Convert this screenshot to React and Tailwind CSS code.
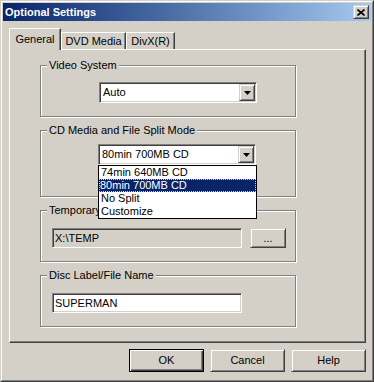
import React from "react";

const sunken =
  "border border-t-[#808080] border-l-[#808080] border-b-white border-r-white p-px shadow-[inset_1px_1px_0_#404040,inset_-1px_-1px_0_#d4d0c8]";
const raised =
  "border border-t-[#d4d0c8] border-l-[#d4d0c8] border-b-[#404040] border-r-[#404040] shadow-[inset_1px_1px_0_white,inset_-1px_-1px_0_#808080]";

function DropBtn() {
  return (
    <div className={`w-[16px] h-[17px] flex items-center justify-center bg-[#d4d0c8] ${raised}`}>
      <svg width="7" height="4" viewBox="0 0 7 4">
        <path d="M0 0H7L3.5 4Z" fill="black" />
      </svg>
    </div>
  );
}

function Combo({ value, children }) {
  return (
    <div className="relative w-[158px]">
      <div className={`h-[21px] bg-white flex items-center ${sunken}`}>
        <span className="flex-1 pl-[2px] leading-[13px]">{value}</span>
        <DropBtn />
      </div>
      {children}
    </div>
  );
}

function Group({ label, h, className, children }) {
  return (
    <div
      className={`relative w-[256px] border border-[#808080] shadow-[1px_1px_0_white,inset_1px_1px_0_white] ${h} ${className}`}
    >
      <span className="absolute left-[6px] -top-[7px] px-[2px] bg-[#d4d0c8] leading-[13px]">
        {label}
      </span>
      {children}
    </div>
  );
}

function Button({ children, def }) {
  return (
    <div
      className={`w-[75px] h-[23px] flex items-center justify-center ${
        def
          ? "border border-black shadow-[inset_1px_1px_0_white,inset_-1px_-1px_0_#404040,inset_-2px_-2px_0_#808080]"
          : raised
      }`}
    >
      {children}
    </div>
  );
}

export default function App() {
  return (
    <div className="w-[374px] h-[382px] bg-[#d4d0c8] border border-t-[#d4d0c8] border-l-[#d4d0c8] border-r-[#404040] border-b-[#404040] font-['Liberation_Sans',Arial,sans-serif] text-[11px] text-black select-none">
      <div className="h-full border border-t-white border-l-white border-r-[#808080] border-b-[#808080] p-px flex flex-col">
        {/* Title bar */}
        <div className="h-[18px] flex items-center bg-gradient-to-r from-[#0a246a] to-[#a6caf0] pl-[2px] pr-[2px]">
          <span className="flex-1 text-white font-bold text-[11px] leading-[13px]">Optional Settings</span>
          <div className={`w-[16px] h-[14px] bg-[#d4d0c8] flex items-center justify-center ${raised}`}>
            <svg width="8" height="7" viewBox="0 0 8 7">
              <path d="M0.5 0.5L7.5 6.5M7.5 0.5L0.5 6.5" stroke="black" strokeWidth="1.6" />
            </svg>
          </div>
        </div>

        {/* Tabs */}
        <div className="mt-[7px] h-[21px] pl-[6px] flex items-end">
          <div className="relative z-10 -mb-px h-[22px] w-[52px] bg-[#d4d0c8] border-l border-t border-l-white border-t-white border-r border-r-[#404040] shadow-[inset_-1px_0_0_#808080] flex items-start justify-center pt-[4px] leading-[13px]">
            General
          </div>
          <div className="h-[17px] w-[65px] border-l border-t border-l-white border-t-white border-r border-r-[#404040] shadow-[inset_-1px_0_0_#808080] flex items-center justify-center leading-[13px]">
            DVD Media
          </div>
          <div className="h-[17px] w-[49px] border-l border-t border-l-white border-t-white border-r border-r-[#404040] shadow-[inset_-1px_0_0_#808080] flex items-center justify-center leading-[13px]">
            DivX(R)
          </div>
        </div>

        {/* Panel */}
        <div className="ml-[6px] mr-[5px] h-[294px] border border-t-white border-l-white border-r-[#404040] border-b-[#404040] shadow-[inset_-1px_-1px_0_#808080] pl-[30px] pt-[15px] flex flex-col gap-[13px]">
          <Group label="Video System" h="h-[52px]" className="pt-[16px] pl-[58px]">
            <Combo value="Auto" />
          </Group>
          <Group label="CD Media and File Split Mode" h="h-[67px]" className="pt-[13px] pl-[57px] z-10">
            <Combo value="80min 700MB CD">
              <div className="absolute left-0 top-full w-[159px] h-[54px] bg-white border border-black leading-[13px]">
                <div className="h-[13px] pl-[2px]">74min 640MB CD</div>
                <div className="h-[13px] pl-px bg-[#0a246a] text-white outline outline-1 outline-dotted outline-[#e8d870] -outline-offset-1">
                  80min 700MB CD
                </div>
                <div className="h-[13px] pl-[2px]">No Split</div>
                <div className="h-[13px] pl-[2px]">Customize</div>
              </div>
            </Combo>
          </Group>
          <Group label="Temporary Folder" h="h-[52px]" className="pt-[17px] pl-[11px]">
            <div className="flex gap-[8px]">
              <div className={`w-[190px] h-[20px] bg-[#d4d0c8] flex items-center pl-[2px] leading-[13px] ${sunken}`}>
                X:\TEMP
              </div>
              <div className={`w-[36px] h-[20px] flex items-center justify-center leading-[13px] ${raised}`}>
                ...
              </div>
            </div>
          </Group>
          <Group label="Disc Label/File Name" h="h-[52px]" className="pt-[17px] pl-[11px]">
            <div className={`w-[190px] h-[20px] bg-white flex items-center pl-[2px] leading-[13px] ${sunken}`}>
              SUPERMAN
            </div>
          </Group>
        </div>

        {/* Buttons */}
        <div className="mt-[6px] flex justify-end gap-[6px] pr-[5px]">
          <Button def>OK</Button>
          <Button>Cancel</Button>
          <Button>Help</Button>
        </div>
      </div>
    </div>
  );
}
